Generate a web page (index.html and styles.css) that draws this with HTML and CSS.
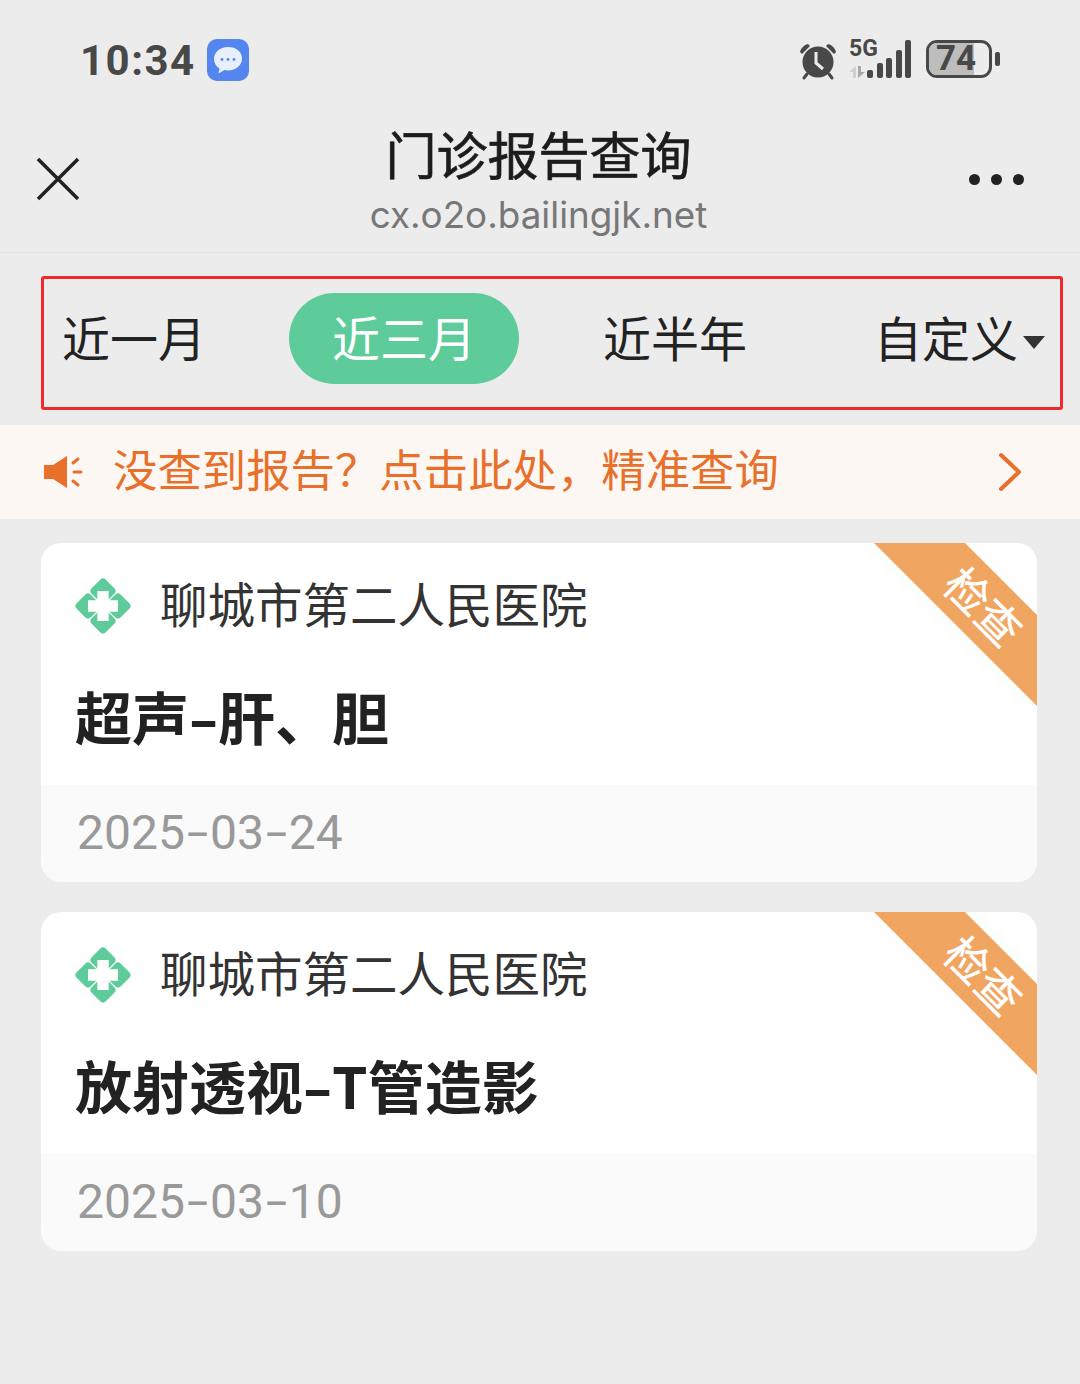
FILE: index.html
```html
<!DOCTYPE html>
<html lang="zh-CN">
<head>
    <meta charset="UTF-8">
    <meta name="viewport" content="width=device-width, initial-scale=1.0">
    <title>门诊报告查询</title>
    <link rel="stylesheet" href="styles.css">
</head>
<body>
    <div class="status-bar">
        <div class="status-left">
            <span class="clock">10:34</span>
            <svg class="msg-icon" width="42" height="42" viewBox="0 0 42 42">
                <rect width="42" height="42" rx="10" fill="#5585ee"/>
                <path d="M21 8c-8 0-14 5-14 12 0 4 2 7.500 5.500 9.500l-1 5 6-3.500c1.200.3 2.300.4 3.500.4 8 0 14-5 14-11.900S29 8 21 8z" fill="#e9f0fd"/>
                <circle cx="15" cy="20.500" r="1.400" fill="#5585ee"/>
                <circle cx="21" cy="20.500" r="1.400" fill="#5585ee"/>
                <circle cx="27" cy="20.500" r="1.400" fill="#5585ee"/>
            </svg>
        </div>
        <div class="status-right">
            <svg class="alarm-icon" width="40" height="40" viewBox="0 0 40 40">
                <circle cx="21" cy="21" r="15.500" fill="#484848"/>
                <path d="M3 11c1-4 4-7 8-8l2 2-8 8zM39 11c-1-4-4-7-8-8l-2 2 8 8z" fill="#484848"/>
                <path d="M10 33l-3 4M32 33l3 4" stroke="#484848" stroke-width="3" stroke-linecap="round"/>
                <path d="M19 11v11l7 6" stroke="#ececec" stroke-width="3" fill="none"/>
            </svg>
            <div class="signal">
                <div class="net">
                    <span class="net-label">5G</span>
                    <svg width="16" height="12" viewBox="0 0 16 12">
                        <path d="M7 0v12H4V6H0z" fill="#cfcfcf"/>
                        <path d="M9 12V0h3v6h4z" fill="#a8a8a8"/>
                    </svg>
                </div>
                <div class="bars">
                    <i class="bar bar-1"></i>
                    <i class="bar bar-2"></i>
                    <i class="bar bar-3"></i>
                    <i class="bar bar-4"></i>
                    <i class="bar bar-5"></i>
                </div>
            </div>
            <div class="battery">
                <div class="battery-body">
                    <div class="battery-level"></div>
                    <span class="battery-num">74</span>
                </div>
                <i class="battery-tip"></i>
            </div>
        </div>
    </div>

    <div class="title-bar">
        <svg class="close-icon" width="44" height="44" viewBox="0 0 44 44">
            <path d="M2 2l40 40M42 2L2 42" stroke="#222" stroke-width="3.500" fill="none"/>
        </svg>
        <div class="title-text">
            <div class="title">门诊报告查询</div>
            <div class="url">cx.o2o.bailingjk.net</div>
        </div>
        <div class="more-dots"><i></i><i></i><i></i></div>
    </div>

    <div class="filter-box">
        <div class="filter-item filter-first">近一月</div>
        <div class="filter-item filter-active">近三月</div>
        <div class="filter-item filter-third">近半年</div>
        <div class="filter-item filter-custom">自定义<i class="caret"></i></div>
    </div>

    <div class="notice">
        <svg class="speaker" width="40" height="34" viewBox="0 0 40 34">
            <path d="M1 10h9L24 1v32L10 24H1z" fill="#e8702a"/>
            <path d="M30 8l5-4M31 17h7M30 26l5 4" stroke="#e8702a" stroke-width="3" stroke-linecap="round" fill="none"/>
        </svg>
        <span class="notice-text">没查到报告？点击此处，精准查询</span>
        <svg class="chevron" width="24" height="40" viewBox="0 0 24 40">
            <path d="M3 3l18 17L3 37" stroke="#e8702a" stroke-width="4" stroke-linecap="round" stroke-linejoin="round" fill="none"/>
        </svg>
    </div>

    <div class="card-list">
        <div class="card">
            <div class="ribbon"><span>检查</span></div>
            <div class="card-main">
                <div class="hospital">
                    <svg class="cross-logo" width="56" height="56" viewBox="0 0 56 56">
                        <rect x="18" y="3" width="20" height="20" rx="4" transform="rotate(45 28 13)" fill="#5dcb9a"/>
                        <rect x="18" y="33" width="20" height="20" rx="4" transform="rotate(45 28 43)" fill="#5dcb9a"/>
                        <rect x="3" y="18" width="20" height="20" rx="4" transform="rotate(45 13 28)" fill="#5dcb9a"/>
                        <rect x="33" y="18" width="20" height="20" rx="4" transform="rotate(45 43 28)" fill="#5dcb9a"/>
                        <path d="M22.300 13h11.400v9.300H43v11.400h-9.300V43H22.300v-9.300H13V22.300h9.300z" fill="#fff"/>
                    </svg>
                    <span class="hospital-name">聊城市第二人民医院</span>
                </div>
                <div class="report-name">超声<span class="dash">-</span>肝、胆</div>
            </div>
            <div class="card-date">2025<span class="date-dash">-</span>03<span class="date-dash">-</span>24</div>
        </div>
        <div class="card">
            <div class="ribbon"><span>检查</span></div>
            <div class="card-main">
                <div class="hospital">
                    <svg class="cross-logo" width="56" height="56" viewBox="0 0 56 56">
                        <rect x="18" y="3" width="20" height="20" rx="4" transform="rotate(45 28 13)" fill="#5dcb9a"/>
                        <rect x="18" y="33" width="20" height="20" rx="4" transform="rotate(45 28 43)" fill="#5dcb9a"/>
                        <rect x="3" y="18" width="20" height="20" rx="4" transform="rotate(45 13 28)" fill="#5dcb9a"/>
                        <rect x="33" y="18" width="20" height="20" rx="4" transform="rotate(45 43 28)" fill="#5dcb9a"/>
                        <path d="M22.300 13h11.400v9.300H43v11.400h-9.300V43H22.300v-9.300H13V22.300h9.300z" fill="#fff"/>
                    </svg>
                    <span class="hospital-name">聊城市第二人民医院</span>
                </div>
                <div class="report-name">放射透视<span class="dash">-</span>T管造影</div>
            </div>
            <div class="card-date">2025<span class="date-dash">-</span>03<span class="date-dash">-</span>10</div>
        </div>
    </div>
</body>
</html>
```

FILE: styles.css
```css
* {
    box-sizing: border-box;
}

body {
    margin: 0;
    height: 1384px;
    overflow: hidden;
    background: #ececec;
    font-family: "Noto Sans CJK SC", "Noto Sans", sans-serif;
    color: #222;
}

/* Status bar */
.status-bar {
    height: 120px;
    padding: 0 80px 0 80px;
    display: flex;
    justify-content: space-between;
    align-items: center;
}

.status-left {
    display: flex;
    align-items: center;
    gap: 11px;
}

.clock {
    font-family: Roboto, sans-serif;
    font-size: 42px;
    font-weight: 700;
    letter-spacing: 1.5px;
    color: #484848;
}

.status-right {
    display: flex;
    align-items: center;
    gap: 12px;
    margin-bottom: 3px;
}

.alarm-icon {
    margin-top: 4px;
}

.signal {
    display: flex;
    align-items: flex-end;
    height: 38px;
}

.net {
    width: 18px;
    height: 38px;
    display: flex;
    flex-direction: column;
    justify-content: space-between;
}

.net-label {
    font-family: Roboto, sans-serif;
    font-size: 23px;
    font-weight: 700;
    line-height: 18px;
    white-space: nowrap;
    color: #484848;
}

.bars {
    display: flex;
    align-items: flex-end;
    gap: 3.500px;
}

.bar {
    width: 6px;
    background: #484848;
    border-radius: 2px;
}

.bar-1 { height: 8px; }
.bar-2 { height: 15px; }
.bar-3 { height: 20px; }
.bar-4 { height: 28px; }
.bar-5 { height: 38px; }

.battery {
    display: flex;
    align-items: center;
    gap: 3px;
    margin-left: 3px;
}

.battery-body {
    position: relative;
    width: 66px;
    height: 38px;
    padding-right: 6px;
    border: 3px solid #484848;
    border-radius: 11px;
    overflow: hidden;
    display: flex;
    align-items: center;
    justify-content: center;
}

.battery-level {
    position: absolute;
    left: 0;
    top: 0;
    bottom: 0;
    width: 75%;
    background: #bdbdbd;
}

.battery-num {
    position: relative;
    font-family: Roboto, sans-serif;
    font-size: 35px;
    font-weight: 700;
    color: #484848;
}

.battery-tip {
    width: 5px;
    height: 14px;
    background: #484848;
    border-radius: 2px;
}

/* Title bar */
.title-bar {
    height: 133px;
    padding: 0 56px 14px 36px;
    display: flex;
    justify-content: space-between;
    align-items: center;
    border-bottom: 1px solid #e2e2e2;
}

.title-text {
    padding-left: 28px;
    text-align: center;
}

.title {
    font-size: 51px;
    font-weight: 400;
    -webkit-text-stroke: 0.7px #1c1c1c;
    line-height: 66px;
    color: #1c1c1c;
}

.url {
    margin-top: 4px;
    margin-bottom: -2px;
    font-family: Inter, sans-serif;
    font-size: 36.800px;
    line-height: 50px;
    color: #777;
    white-space: nowrap;
}

.more-dots {
    display: flex;
    gap: 11px;
}

.more-dots i {
    width: 11px;
    height: 11px;
    border-radius: 50%;
    background: #222;
}

/* Filter tabs */
.filter-box {
    height: 134px;
    margin: 23px 17px 15px 41px;
    padding-bottom: 9px;
    border: 3px solid #f02a2a;
    border-radius: 3px;
    display: flex;
    align-items: center;
    font-size: 48px;
    color: #222;
}

.filter-item {
    height: 91px;
    line-height: 86px;
    white-space: nowrap;
}

.filter-first {
    margin-left: 18px;
}

.filter-active {
    margin-left: 83px;
    width: 230px;
    border-radius: 46px;
    background: #5dcb9a;
    color: #fff;
    text-align: center;
}

.filter-third {
    margin-left: 84px;
}

.filter-custom {
    margin-left: 127px;
    display: flex;
    align-items: flex-start;
}

.caret {
    margin: 43px 0 0 5px;
    width: 0;
    height: 0;
    border-left: 11px solid transparent;
    border-right: 11px solid transparent;
    border-top: 13px solid #333;
}

/* Notice strip */
.notice {
    height: 94px;
    padding: 0 58px 0 43px;
    background: #fcf7f3;
    display: flex;
    align-items: center;
    color: #e8702a;
}

.notice-text {
    margin-left: 30px;
    padding-bottom: 10px;
    font-size: 44.400px;
    white-space: nowrap;
}

.chevron {
    margin-left: auto;
}

/* Report cards */
.card-list {
    margin: 24px 43px 0 41px;
    display: flex;
    flex-direction: column;
    gap: 30px;
}

.card {
    position: relative;
    height: 339px;
    display: flex;
    flex-direction: column;
}

.ribbon {
    position: absolute;
    top: 0;
    right: 0;
    width: 163px;
    height: 163px;
}

.ribbon::before {
    content: '';
    position: absolute;
    inset: 0;
    background: #f0a561;
    clip-path: polygon(0 0, 91px 0, 163px 72px, 163px 163px);
}

.ribbon span {
    position: absolute;
    left: 67px;
    top: 40px;
    width: 88px;
    line-height: 44px;
    text-align: center;
    font-size: 44px;
    -webkit-text-stroke: 0.4px #fff;
    color: #fff;
    white-space: nowrap;
    transform: rotate(45deg);
}

.card-main {
    height: 242px;
    padding: 35px 34px 0;
    background: #fff;
    border-radius: 20px 20px 0 0;
}

.hospital {
    display: flex;
    align-items: center;
    gap: 29px;
    height: 56px;
}

.hospital-name {
    margin-bottom: 8px;
    font-size: 47.500px;
    color: #333;
    white-space: nowrap;
}

.report-name {
    margin-top: 40px;
    font-size: 57px;
    font-weight: 700;
    line-height: 82px;
    color: #222;
    white-space: nowrap;
}

.dash {
    display: inline-block;
    margin: 0 4px;
    transform: scaleX(1.500);
}

.card-date {
    flex: 1;
    padding-left: 36px;
    background: #fafafa;
    border-radius: 0 0 20px 20px;
    font-family: Roboto, sans-serif;
    font-size: 48px;
    line-height: 95px;
    color: #999;
}

.date-dash {
    display: inline-block;
    width: 25px;
    text-align: center;
    transform: scaleX(1.600);
}
```
